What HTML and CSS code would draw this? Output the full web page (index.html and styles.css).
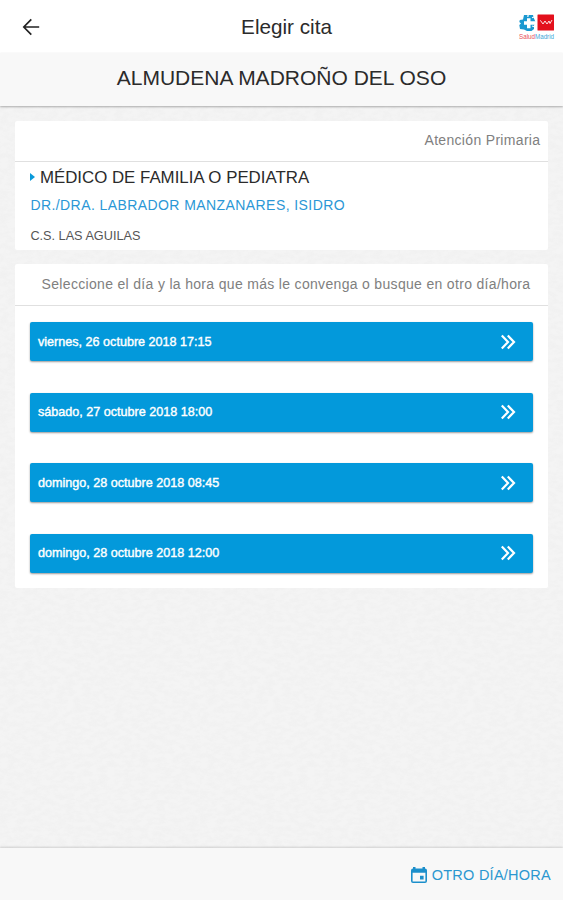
FILE: index.html
```
<!DOCTYPE html>
<html lang="es">
<head>
  <meta charset="UTF-8">
  <meta name="viewport" content="width=device-width, initial-scale=1.0">
  <title>Elegir cita</title>
  <link rel="stylesheet" href="styles.css">
</head>
<body>
  <svg class="sprite" aria-hidden="true">
    <symbol id="chevrons" viewBox="0 0 16 16">
      <path d="M1.800 1.600 8 8l-6.200 6.400M7.800 1.600 14 8l-6.200 6.400" fill="none" stroke="#fff" stroke-width="2.200"/>
    </symbol>
  </svg>

  <header class="topbar">
    <button class="back" aria-label="Volver">
      <svg width="18" height="18" viewBox="0 0 18 18" fill="none" stroke="#222" stroke-width="1.700">
        <path d="M9.300 1.300 1.800 9l7.500 7.700M2 9h15.200"/>
      </svg>
    </button>
    <h1>Elegir cita</h1>
    <svg class="logo" width="36" height="27" viewBox="0 0 36 27">
      <!-- cruz de salud -->
      <path d="M5 1h9l1 3.500L16.500 8 15 11.500V15l-2.500 2H8l-3-1.500L1 15 .3 11 2 9.500.3 8l.5-2L4 5.500z" fill="#1b98d0"/>
      <path d="M8 4.300h3.500v3H17v3.400h-5.500v3.500H8v-3.500H5V7.300h3z" fill="#fff"/>
      <path d="M9.300 0l-.5 3M13 3.800l4-1.500M13 12l3.500 1" stroke="#fff" stroke-width="1.200"/>
      <rect x="18.500" y=".5" width="16.500" height="16" rx=".5" fill="#e3101c"/>
      <path d="M21.300 6.300l2.700 3.700 2-3 2 3 2-3 1 2.500 2-3.500" fill="none" stroke="#fff" stroke-width="1" opacity=".85"/>
      <text x="0" y="24.500" font-size="6.800" textLength="16" lengthAdjust="spacingAndGlyphs" fill="#e8505a">Salud</text>
      <text x="16" y="24.500" font-size="6.800" textLength="19" lengthAdjust="spacingAndGlyphs" fill="#3fa8d8">Madrid</text>
    </svg>
  </header>
  <div class="patient">ALMUDENA MADROÑO DEL OSO</div>

  <main>
    <section class="card doctor">
      <div class="card-head">Atención Primaria</div>
      <h2>MÉDICO DE FAMILIA O PEDIATRA</h2>
      <p class="name">DR./DRA. LABRADOR MANZANARES, ISIDRO</p>
      <p class="center">C.S. LAS AGUILAS</p>
    </section>

    <section class="card">
      <div class="card-head hint">Seleccione el día y la hora que más le convenga o busque en otro día/hora</div>
      <div class="slots">
        <button class="slot"><span>viernes, 26 octubre 2018 17:15</span><svg width="16" height="16"><use href="#chevrons"/></svg></button>
        <button class="slot"><span>sábado, 27 octubre 2018 18:00</span><svg width="16" height="16"><use href="#chevrons"/></svg></button>
        <button class="slot"><span>domingo, 28 octubre 2018 08:45</span><svg width="16" height="16"><use href="#chevrons"/></svg></button>
        <button class="slot"><span>domingo, 28 octubre 2018 12:00</span><svg width="16" height="16"><use href="#chevrons"/></svg></button>
      </div>
    </section>
  </main>

  <footer>
    <button class="other">
      <svg width="16" height="16" viewBox="0 0 16 16">
        <path fill="#1c8fcb" fill-rule="evenodd" d="M2 0h2.500v1.500h7V0H14v1.500a2 2 0 0 1 2 2V14a2 2 0 0 1-2 2H2a2 2 0 0 1-2-2V3.500a2 2 0 0 1 2-2zM1.600 5.800v8.600h12.800V5.800zM9 8.800h3.600v3.600H9z"/>
      </svg>
      <span>OTRO DÍA/HORA</span>
    </button>
  </footer>
</body>
</html>
```

FILE: styles.css
```
* { box-sizing: border-box; }
body {
  margin: 0;
  height: 100vh;
  display: flex;
  flex-direction: column;
  font-family: "Liberation Sans", Arial, sans-serif;
  color: #2b2b2b;
  background-color: #f4f4f4;
  /* textura de papel */
  background-image: url("data:image/svg+xml,%3Csvg xmlns='http://www.w3.org/2000/svg' width='200' height='200'%3E%3Cfilter id='n'%3E%3CfeTurbulence type='fractalNoise' baseFrequency='.12 .22' numOctaves='3' stitchTiles='stitch'/%3E%3CfeColorMatrix values='0 0 0 0 .5 0 0 0 0 .5 0 0 0 0 .5 .14 0 0 0 -.05'/%3E%3C/filter%3E%3Crect width='200' height='200' filter='url(%23n)'/%3E%3C/svg%3E");
}
h1, h2, p { margin: 0; font-weight: normal; }
button { border: none; background: none; padding: 0; font-family: inherit; cursor: pointer; }
svg { display: block; flex: none; }
.sprite { display: none; }

/* Cabecera */
.topbar {
  height: 53px;
  flex: none;
  display: grid;
  grid-template-columns: 60px 1fr 60px;
  align-items: center;
  background: #fff;
}
.back { margin-left: 22px; justify-self: start; }
.topbar h1 { margin-left: 10px; font-size: 20.7px; line-height: 24px; text-align: center; }
.logo { justify-self: end; margin-right: 8px; margin-top: 2px; }
.patient {
  height: 53px;
  flex: none;
  line-height: 50px;
  text-align: center;
  font-size: 21px;
  background: #f8f8f8;
  box-shadow: 0 1px 2px rgba(0,0,0,0.3);
}

/* Tarjetas */
main { flex: 1; padding: 15px 14.6px 0 15.4px; }
.card { background: #fff; margin-bottom: 14px; border-radius: 2px; }
.card-head {
  height: 41px;
  line-height: 39px;
  padding-right: 8px;
  border-bottom: 1px solid #e0e0e0;
  text-align: right;
  font-size: 14px;
  letter-spacing: 0.32px;
  color: #808080;
}
.doctor { height: 129px; }
.doctor h2 {
  display: flex;
  align-items: center;
  gap: 4.5px;
  padding: 6px 0 0 15px;
  font-size: 16.85px;
  line-height: 20px;
}
.doctor h2::before {
  content: "";
  margin-top: -3px;
  border: 4.5px solid transparent;
  border-left: 5px solid #0a9ada;
  border-right: 0;
}
.name { padding: 8px 15px 0; font-size: 14px; line-height: 18px; letter-spacing: 0.42px; color: #2b97d6; }
.center { padding: 14px 15px 0; font-size: 12.7px; line-height: 16px; color: #555; }
.hint { height: 42px; line-height: 41px; padding-right: 18px; letter-spacing: 0.32px; }

.slots { display: flex; flex-direction: column; gap: 31.6px; padding: 16px 15.6px 15px 15px; }
.slot {
  height: 39px;
  display: flex;
  align-items: center;
  justify-content: space-between;
  padding: 0 17px 0 7.6px;
  border-radius: 2px;
  background: #0399db;
  color: #fff;
  font-size: 12.6px;
  -webkit-text-stroke: 0.4px #fff;
  box-shadow: 0 1px 2px rgba(0,0,0,0.4);
}

/* Pie */
footer {
  height: 52px;
  flex: none;
  display: flex;
  justify-content: flex-end;
  align-items: center;
  padding: 1px 12px 0 0;
  background: #f8f8f8;
  box-shadow: 0 -1px 2px rgba(0,0,0,0.15);
}
.other { display: flex; align-items: center; gap: 5px; font-size: 14.5px; letter-spacing: 0.25px; color: #2b97d0; }
```
